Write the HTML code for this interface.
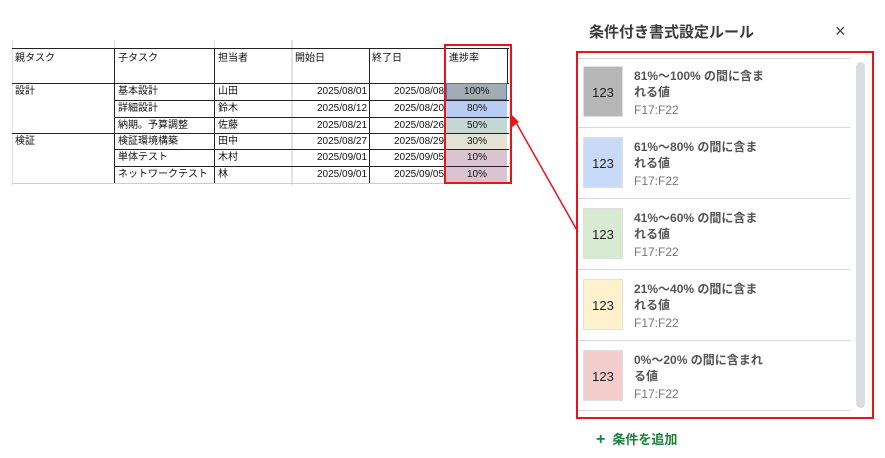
<!DOCTYPE html>
<html><head><meta charset="utf-8"><style>
body{margin:0;width:885px;height:458px;background:#fff;position:relative;overflow:hidden;font-family:"Liberation Sans","Noto Sans CJK JP",sans-serif;}
.a{position:absolute;}
.c{position:absolute;font-size:10px;color:#111;line-height:17px;white-space:nowrap;}
.hl{position:absolute;height:1px;background:#222;}
.vl{position:absolute;width:1px;background:#222;}
.g{position:absolute;background:#e2e2e2;}
.sw{position:absolute;left:583px;width:40px;height:51px;font-size:13px;color:#222;text-align:center;line-height:51px;box-sizing:border-box;border:1px solid #e0e0e0}
.t{position:absolute;left:634px;font-size:12px;color:#555;line-height:16px;font-weight:bold;}
.t span{display:block;font-weight:normal;color:#777;margin-top:2px}
.sep{position:absolute;left:578px;width:272px;height:1px;background:#d8d8d8}
</style></head><body>
<div class="g" style="left:12px;top:40px;width:1px;height:145px"></div>
<div class="g" style="left:114px;top:40px;width:1px;height:8px"></div>
<div class="g" style="left:214px;top:40px;width:1px;height:8px"></div>
<div class="g" style="left:291px;top:40px;width:2px;height:145px"></div>
<div class="g" style="left:12px;top:183px;width:500px;height:1px;background:#ccc"></div>
<div class="hl" style="left:12px;top:48px;width:497px"></div>
<div class="hl" style="left:12px;top:83px;width:497px"></div>
<div class="hl" style="left:114px;top:100px;width:395px"></div>
<div class="hl" style="left:114px;top:117px;width:395px"></div>
<div class="hl" style="left:12px;top:133px;width:497px"></div>
<div class="hl" style="left:114px;top:149px;width:395px"></div>
<div class="hl" style="left:114px;top:166px;width:395px"></div>
<div class="vl" style="left:114px;top:48px;height:135px"></div>
<div class="vl" style="left:214px;top:48px;height:135px"></div>
<div class="vl" style="left:369px;top:48px;height:135px"></div>
<div class="vl" style="left:507px;top:48px;height:35px"></div>
<div class="a" style="left:446px;top:83px;width:61px;height:17px;background:#a3adb8;border:1px solid #2a7ad6;box-sizing:border-box"></div>
<div class="a" style="left:446px;top:101px;width:61px;height:16px;background:#b8cdf1"></div>
<div class="a" style="left:446px;top:118px;width:61px;height:15px;background:#c4d9d4"></div>
<div class="a" style="left:446px;top:134px;width:61px;height:15px;background:#e4e3d3"></div>
<div class="a" style="left:446px;top:150px;width:61px;height:16px;background:#dac4d1"></div>
<div class="a" style="left:446px;top:167px;width:61px;height:15px;background:#dac4d1"></div>
<div class="c" style="left:15px;top:50px">親タスク</div>
<div class="c" style="left:118px;top:50px">子タスク</div>
<div class="c" style="left:218px;top:50px">担当者</div>
<div class="c" style="left:295px;top:50px">開始日</div>
<div class="c" style="left:372px;top:50px">終了日</div>
<div class="c" style="left:449px;top:50px">進捗率</div>
<div class="c" style="left:15px;top:83px">設計</div>
<div class="c" style="left:15px;top:133px">検証</div>
<div class="c" style="left:118px;top:83px">基本設計</div>
<div class="c" style="left:118px;top:100px">詳細設計</div>
<div class="c" style="left:118px;top:117px">納期。予算調整</div>
<div class="c" style="left:118px;top:133px">検証環境構築</div>
<div class="c" style="left:118px;top:149px">単体テスト</div>
<div class="c" style="left:118px;top:166px">ネットワークテスト</div>
<div class="c" style="left:218px;top:83px">山田</div>
<div class="c" style="left:218px;top:100px">鈴木</div>
<div class="c" style="left:218px;top:117px">佐藤</div>
<div class="c" style="left:218px;top:133px">田中</div>
<div class="c" style="left:218px;top:149px">木村</div>
<div class="c" style="left:218px;top:166px">林</div>
<div class="c" style="left:317px;top:83px">2025/08/01</div>
<div class="c" style="left:317px;top:100px">2025/08/12</div>
<div class="c" style="left:317px;top:117px">2025/08/21</div>
<div class="c" style="left:317px;top:133px">2025/08/27</div>
<div class="c" style="left:317px;top:149px">2025/09/01</div>
<div class="c" style="left:317px;top:166px">2025/09/01</div>
<div class="a" style="left:370px;top:83px;width:75px;height:100px;overflow:hidden">
<div class="c" style="left:24px;top:0">2025/08/08</div>
<div class="c" style="left:24px;top:17px">2025/08/20</div>
<div class="c" style="left:24px;top:34px">2025/08/26</div>
<div class="c" style="left:24px;top:50px">2025/08/29</div>
<div class="c" style="left:24px;top:66px">2025/09/05</div>
<div class="c" style="left:24px;top:83px">2025/09/05</div>
</div>
<div class="c" style="left:464px;top:83px">100%</div>
<div class="c" style="left:467px;top:100px">80%</div>
<div class="c" style="left:467px;top:117px">50%</div>
<div class="c" style="left:467px;top:133px">30%</div>
<div class="c" style="left:467px;top:149px">10%</div>
<div class="c" style="left:467px;top:166px">10%</div>
<div class="a" style="left:444px;top:44px;width:68px;height:140px;border:2px solid #e8141b;box-sizing:border-box"></div>
<svg class="a" style="left:0;top:0" width="885" height="458"><line x1="578" y1="232" x2="514" y2="119" stroke="#e8141b" stroke-width="1.5"/><path d="M512 115 L512 127 L519 122 Z" fill="#e8141b"/></svg>
<div class="a" style="left:589px;top:21px;font-size:15px;color:#3c3c3c;font-weight:bold">条件付き書式設定ルール</div>
<div class="a" style="left:835px;top:21px;font-size:18px;color:#444">×</div>
<div class="a" style="left:576px;top:51px;width:298px;height:368px;border:2px solid #e8141b;box-sizing:border-box"></div>
<div class="sep" style="top:58px"></div>
<div class="a" style="left:856px;top:62px;width:9px;height:346px;background:#dadce0;border-radius:5px"></div>
<div class="sw" style="top:66px;background:#b7b7b7">123</div>
<div class="t" style="top:68px">81%～100% の間に含ま<br>れる値<span>F17:F22</span></div>
<div class="sep" style="top:127px"></div>
<div class="sw" style="top:137px;background:#c9daf8">123</div>
<div class="t" style="top:139px">61%～80% の間に含ま<br>れる値<span>F17:F22</span></div>
<div class="sep" style="top:198px"></div>
<div class="sw" style="top:208px;background:#d9ead3">123</div>
<div class="t" style="top:210px">41%～60% の間に含ま<br>れる値<span>F17:F22</span></div>
<div class="sep" style="top:269px"></div>
<div class="sw" style="top:279px;background:#fff2cc">123</div>
<div class="t" style="top:281px">21%～40% の間に含ま<br>れる値<span>F17:F22</span></div>
<div class="sep" style="top:340px"></div>
<div class="sw" style="top:350px;background:#f4cccc">123</div>
<div class="t" style="top:352px">0%～20% の間に含まれ<br>る値<span>F17:F22</span></div>
<div class="sep" style="top:410px"></div>
<div class="a" style="left:596px;top:429px;font-size:13px;color:#188038;font-weight:bold"><span style="font-size:16px;margin-right:7px">+</span>条件を追加</div>
</body></html>
